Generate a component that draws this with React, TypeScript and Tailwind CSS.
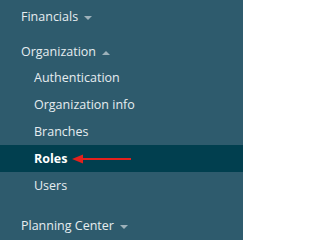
const Caret = ({ up = false }: { up?: boolean }) => (
  <svg width="8" height="4" viewBox="0 0 8 4" className="ml-[6px] mt-[3px] fill-[#9db1ba]">
    {up ? <path d="M0 4 L4 0 L8 4 Z" /> : <path d="M0 0 L8 0 L4 4 Z" />}
  </svg>
);

const SubItem = ({ label, active = false }: { label: string; active?: boolean }) => (
  <div
    className={`flex h-[27px] items-center pl-[34px] leading-[27px] ${
      active ? 'bg-[#013f4f] font-bold text-white' : 'text-[#e6edf0]'
    }`}
  >
    {label}
    {active && (
      <svg width="60" height="10" viewBox="0 0 60 10" className="ml-[5px] mt-[1px]">
        <path d="M0 5 L11 0.5 L11 9.5 Z" fill="#e3211d" />
        <rect x="9" y="4" width="50" height="2" fill="#e3211d" />
      </svg>
    )}
  </div>
);

export default function App() {
  return (
    <div className="h-[240px] w-[243px] bg-[#2e5b6d] pt-[3px] font-['Open_Sans',sans-serif] text-[12.5px] text-[#e6edf0]">
      <div className="flex h-[27px] items-center pl-[21px] leading-[27px]">
        Financials
        <Caret />
      </div>
      <div className="mt-[9px] flex h-[25px] items-center pl-[21px] leading-[25px]">
        Organization
        <Caret up />
      </div>
      <SubItem label="Authentication" />
      <SubItem label="Organization info" />
      <SubItem label="Branches" />
      <SubItem label="Roles" active />
      <SubItem label="Users" />
      <div className="mt-[13px] flex h-[27px] items-center pl-[21px] leading-[27px]">
        Planning Center
        <Caret />
      </div>
    </div>
  );
}
